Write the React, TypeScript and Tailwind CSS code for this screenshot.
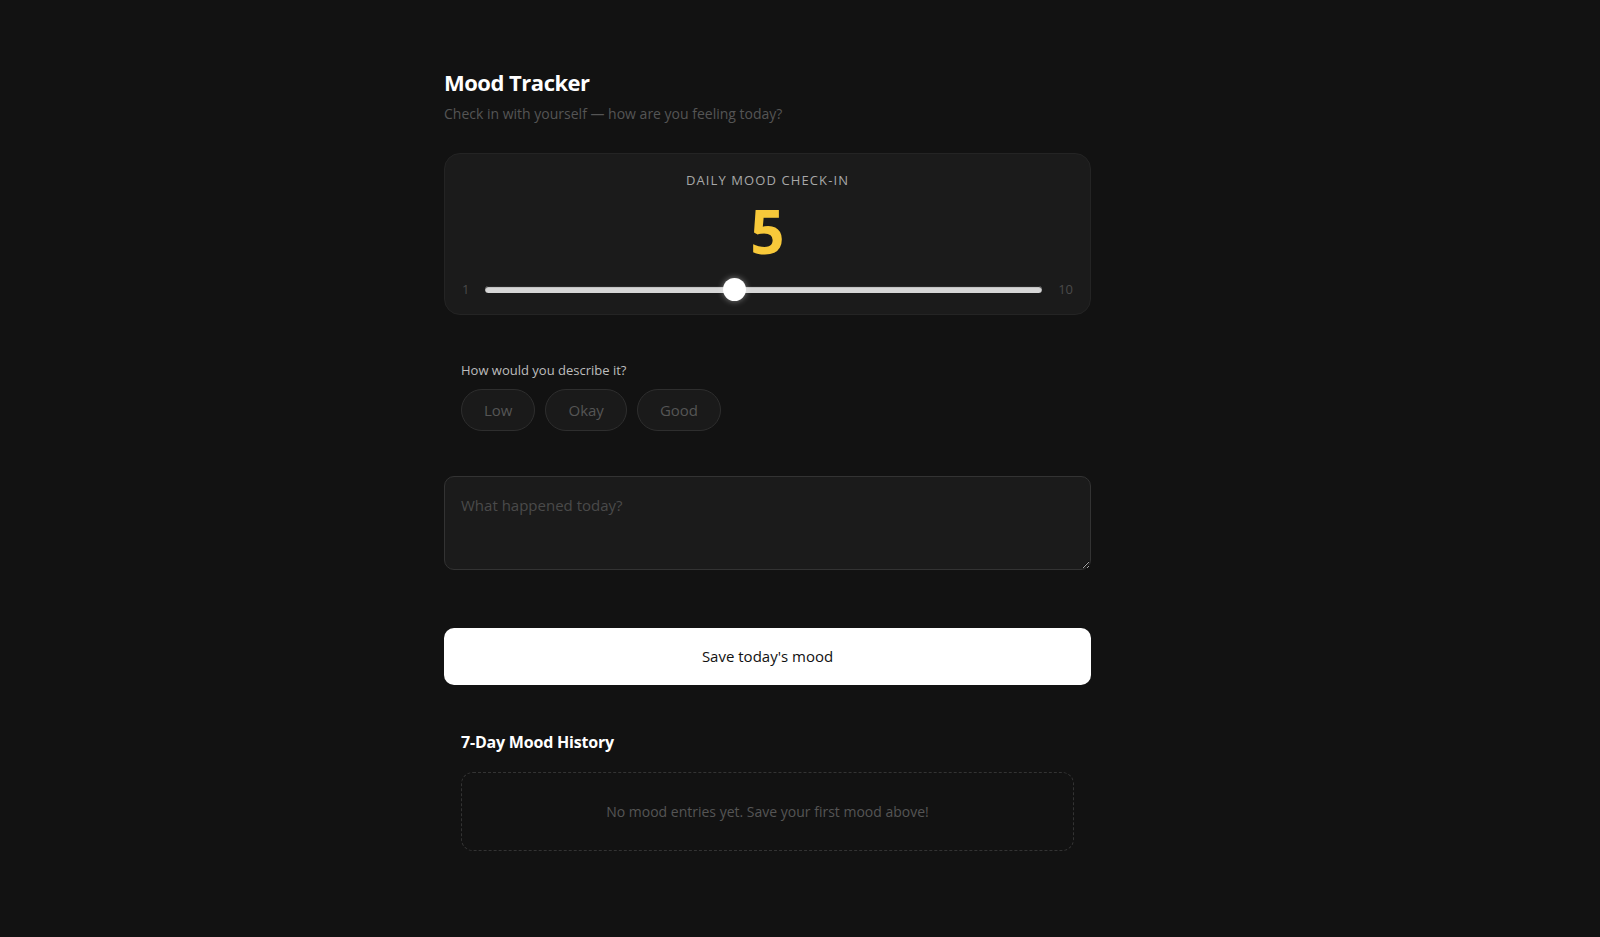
import { useState } from "react";

const moods = ["Low", "Okay", "Good"];

function MoodSlider({ value, setValue }: { value: number; setValue: (v: number) => void }) {
    const pct = ((value - 1) / 9) * 100;

    return (
        <div className="flex items-center gap-[16px]">
            <span className="text-[13px] text-[#4a4a4a]">1</span>
            <div className="relative flex-1 h-[23px] flex items-center">
                <div className="w-full h-[7px] rounded-full bg-[#d6d6d6] shadow-[inset_0_1px_1px_rgba(0,0,0,0.9)]"></div>
                <div
                    className="absolute top-0 w-[23px] h-[23px] rounded-full bg-white shadow-[0_0_6px_rgba(255,255,255,0.45)]"
                    style={{ left: `calc(${pct}% - ${(pct / 100) * 23}px)` }}
                ></div>
                <input
                    type="range"
                    min={1}
                    max={10}
                    value={value}
                    onChange={(e) => setValue(Number(e.target.value))}
                    className="absolute inset-0 w-full opacity-0 cursor-pointer"
                />
            </div>
            <span className="text-[13px] text-[#4a4a4a]">10</span>
        </div>
    );
}

export default function App() {
    const [value, setValue] = useState(5);
    const [mood, setMood] = useState<string | null>(null);
    const [note, setNote] = useState("");

    return (
        <div className="min-h-screen w-full bg-[#121212] font-['Open_Sans',sans-serif]">
            <div className="ml-[444px] w-[647px] pt-[66px] pb-16">
                <h1 className="text-[22px] leading-8 font-bold text-white tracking-[-0.5px]">
                    Mood Tracker
                </h1>
                <p className="mt-[6px] text-sm text-[#555555]">
                    Check in with yourself — how are you feeling today?
                </p>

                <div className="mt-[29px] rounded-2xl border border-[#242424] bg-[#1b1b1b] px-[17px] pt-4 pb-[13px]">
                    <p className="text-center text-[13px] leading-5 tracking-[1.1px] uppercase text-[#a8a8a8]">
                        Daily mood check-in
                    </p>
                    <p className="mt-[11px] text-center text-6xl leading-[60px] font-bold text-[#f8c93a]">
                        {value}
                    </p>
                    <div className="mt-[17px]">
                        <MoodSlider value={value} setValue={setValue} />
                    </div>
                </div>

                <div className="mt-[45px] px-[17px]">
                    <p className="text-[13px] leading-5 font-medium text-[#bdbdbd]">
                        How would you describe it?
                    </p>
                    <div className="mt-[9px] flex gap-2.5">
                        {moods.map((m) => (
                            <button
                                key={m}
                                onClick={() => setMood(m)}
                                className={`h-[42px] px-[22px] rounded-full border text-[15px] ${
                                    mood === m
                                        ? "border-[#f8c93a] bg-[#2a2415] text-[#f8c93a]"
                                        : "border-[#2e2e2e] bg-[#1a1a1a] text-[#555555]"
                                }`}
                            >
                                {m}
                            </button>
                        ))}
                    </div>
                </div>

                <textarea
                    value={note}
                    onChange={(e) => setNote(e.target.value)}
                    placeholder="What happened today?"
                    className="mt-[45px] block w-full h-[94px] resize-y rounded-[10px] border border-[#333333] bg-[#1b1b1b] px-4 pt-[18px] pb-4 text-[15px] leading-5 text-[#dddddd] placeholder:text-[#4a4a4a] outline-none"
                ></textarea>

                <button className="mt-[58px] w-full h-[57px] rounded-[10px] bg-white text-[15px] font-medium text-[#111111]">
                    Save today's mood
                </button>

                <div className="mt-[45px] px-[17px]">
                    <h2 className="text-base leading-6 font-bold text-white tracking-[-0.2px]">
                        7-Day Mood History
                    </h2>
                    <div className="mt-[18px] h-[79px] flex items-center justify-center rounded-xl border border-dashed border-[#333333]">
                        <p className="text-sm text-[#555555]">
                            No mood entries yet. Save your first mood above!
                        </p>
                    </div>
                </div>
            </div>
        </div>
    );
}
